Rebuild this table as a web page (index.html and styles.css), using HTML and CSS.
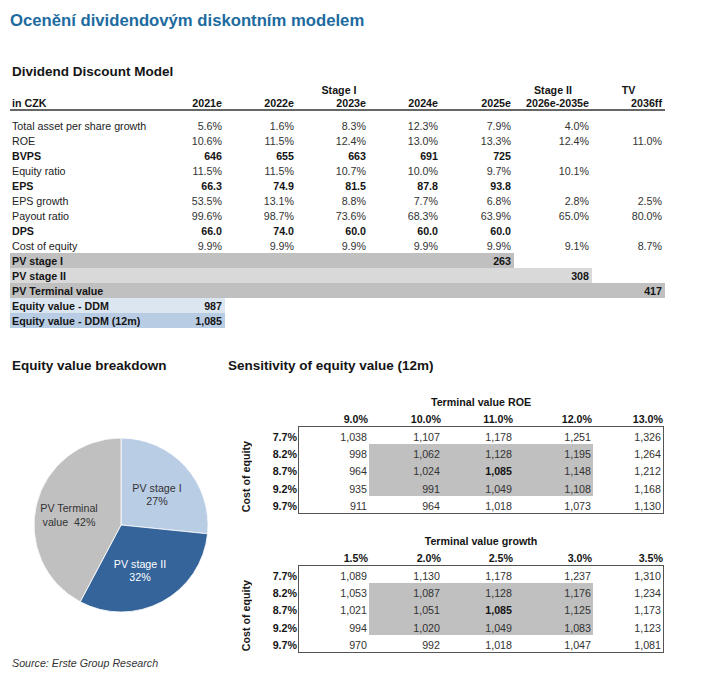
FILE: index.html
```html
<!DOCTYPE html>
<html lang="cs">
<head>
<meta charset="utf-8">
<title>Ocenění dividendovým diskontním modelem</title>
<link rel="stylesheet" href="styles.css">
</head>
<body>
<h1 class="title">Ocenění dividendovým diskontním modelem</h1>
<h2 class="sec ddm-title">Dividend Discount Model</h2>
<table class="ddm">
  <colgroup>
    <col class="w-label"><col class="w73"><col class="w72"><col class="w72"><col class="w72"><col class="w73"><col class="w78"><col class="w73">
  </colgroup>
  <thead>
    <tr class="stage"><th></th><th></th><th></th><th class="st1">Stage I</th><th></th><th></th><th class="st">Stage II</th><th class="st">TV</th></tr>
    <tr class="years"><th class="lbl">in CZK</th><th>2021e</th><th>2022e</th><th>2023e</th><th>2024e</th><th>2025e</th><th>2026e-2035e</th><th>2036ff</th></tr>
  </thead>
  <tbody>
    <tr class="first"><td class="lbl">Total asset per share growth</td><td>5.6%</td><td>1.6%</td><td>8.3%</td><td>12.3%</td><td>7.9%</td><td>4.0%</td><td></td></tr>
    <tr><td class="lbl">ROE</td><td>10.6%</td><td>11.5%</td><td>12.4%</td><td>13.0%</td><td>13.3%</td><td>12.4%</td><td>11.0%</td></tr>
    <tr class="b"><td class="lbl">BVPS</td><td>646</td><td>655</td><td>663</td><td>691</td><td>725</td><td></td><td></td></tr>
    <tr><td class="lbl">Equity ratio</td><td>11.5%</td><td>11.5%</td><td>10.7%</td><td>10.0%</td><td>9.7%</td><td>10.1%</td><td></td></tr>
    <tr class="b"><td class="lbl">EPS</td><td>66.3</td><td>74.9</td><td>81.5</td><td>87.8</td><td>93.8</td><td></td><td></td></tr>
    <tr><td class="lbl">EPS growth</td><td>53.5%</td><td>13.1%</td><td>8.8%</td><td>7.7%</td><td>6.8%</td><td>2.8%</td><td>2.5%</td></tr>
    <tr><td class="lbl">Payout ratio</td><td>99.6%</td><td>98.7%</td><td>73.6%</td><td>68.3%</td><td>63.9%</td><td>65.0%</td><td>80.0%</td></tr>
    <tr class="b"><td class="lbl">DPS</td><td>66.0</td><td>74.0</td><td>60.0</td><td>60.0</td><td>60.0</td><td></td><td></td></tr>
    <tr><td class="lbl">Cost of equity</td><td>9.9%</td><td>9.9%</td><td>9.9%</td><td>9.9%</td><td>9.9%</td><td>9.1%</td><td>8.7%</td></tr>
    <tr class="b pv1"><td class="lbl">PV stage I</td><td></td><td></td><td></td><td></td><td>263</td><td></td><td></td></tr>
    <tr class="b pv2"><td class="lbl">PV stage II</td><td></td><td></td><td></td><td></td><td></td><td>308</td><td></td></tr>
    <tr class="b pvtv"><td class="lbl">PV Terminal value</td><td></td><td></td><td></td><td></td><td></td><td></td><td>417</td></tr>
    <tr class="b eq1"><td class="lbl">Equity value - DDM</td><td>987</td><td></td><td></td><td></td><td></td><td></td><td></td></tr>
    <tr class="b eq2"><td class="lbl">Equity value - DDM (12m)</td><td>1,085</td><td></td><td></td><td></td><td></td><td></td><td></td></tr>
  </tbody>
</table>

<div class="bottom">
  <div class="left">
    <h2 class="sec pad">Equity value breakdown</h2>
    <svg class="pie" width="228" height="280" viewBox="0 0 228 280">
      <path d="M121,151 L121,64 A87,87 0 0 1 207.55,159.79 Z" fill="#b9cde5" stroke="#fff" stroke-width="0.8"/>
      <path d="M121,151 L207.55,159.79 A87,87 0 0 1 80.16,227.82 Z" fill="#35649b" stroke="#fff" stroke-width="0.8"/>
      <path d="M121,151 L80.16,227.82 A87,87 0 0 1 121,64 Z" fill="#c0c0c0" stroke="#fff" stroke-width="0.8"/>
      <text class="pl" x="157" y="117.7">PV stage I</text>
      <text class="pl" x="157" y="131">27%</text>
      <text class="pl" x="69" y="138.3">PV Terminal</text>
      <text class="pl" x="69" y="151.7">value&#160; 42%</text>
      <text class="pl w" x="140" y="194">PV stage II</text>
      <text class="pl w" x="140" y="206.7">32%</text>
    </svg>
    <p class="source">Source: Erste Group Research</p>
  </div>
  <div class="right">
    <h2 class="sec">Sensitivity of equity value (12m)</h2>

    <div class="sens first-sens">
      <div class="sens-title">Terminal value ROE</div>
      <div class="sens-head"><span>9.0%</span><span>10.0%</span><span>11.0%</span><span>12.0%</span><span>13.0%</span></div>
      <div class="sens-side">
        <div class="vlabel"><span>Cost of equity</span></div>
        <span class="rl r1">7.7%</span><span class="rl r2">8.2%</span><span class="rl r3">8.7%</span><span class="rl r4">9.2%</span><span class="rl r5">9.7%</span>
      </div>
      <div class="sens-box">
        <span>1,038</span><span>1,107</span><span>1,178</span><span>1,251</span><span>1,326</span>
        <span>998</span><span class="g">1,062</span><span class="g">1,128</span><span class="g">1,195</span><span>1,264</span>
        <span>964</span><span class="g">1,024</span><span class="g b">1,085</span><span class="g">1,148</span><span>1,212</span>
        <span>935</span><span class="g">991</span><span class="g">1,049</span><span class="g">1,108</span><span>1,168</span>
        <span>911</span><span>964</span><span>1,018</span><span>1,073</span><span>1,130</span>
      </div>
    </div>

    <div class="sens second-sens">
      <div class="sens-title">Terminal value growth</div>
      <div class="sens-head"><span>1.5%</span><span>2.0%</span><span>2.5%</span><span>3.0%</span><span>3.5%</span></div>
      <div class="sens-side">
        <div class="vlabel"><span>Cost of equity</span></div>
        <span class="rl r1">7.7%</span><span class="rl r2">8.2%</span><span class="rl r3">8.7%</span><span class="rl r4">9.2%</span><span class="rl r5">9.7%</span>
      </div>
      <div class="sens-box">
        <span>1,089</span><span>1,130</span><span>1,178</span><span>1,237</span><span>1,310</span>
        <span>1,053</span><span class="g">1,087</span><span class="g">1,128</span><span class="g">1,176</span><span>1,234</span>
        <span>1,021</span><span class="g">1,051</span><span class="g b">1,085</span><span class="g">1,125</span><span>1,173</span>
        <span>994</span><span class="g">1,020</span><span class="g">1,049</span><span class="g">1,083</span><span>1,123</span>
        <span>970</span><span>992</span><span>1,018</span><span>1,047</span><span>1,081</span>
      </div>
    </div>
  </div>
</div>
</body>
</html>
```

FILE: styles.css
```css
* { box-sizing: border-box; }

body {
  margin: 0;
  background: #fff;
  font-family: "Liberation Sans", Arial, sans-serif;
  font-size: 10.7px;
  color: #333;
}

.title {
  margin: 0;
  padding: 11px 0 0 10px;
  font-size: 16.7px;
  line-height: 20px;
  font-weight: 700;
  color: #1d6b9f;
}

.sec {
  margin: 0;
  font-size: 13.5px;
  line-height: 16px;
  font-weight: 700;
  color: #151515;
}

.ddm-title {
  margin-top: 33px;
  padding-left: 12px;
}

/* ---------- DDM table ---------- */
.ddm {
  margin: 3px 0 0 10px;
  width: 655px;
  table-layout: fixed;
  border-collapse: separate;
  border-spacing: 0;
}
.w-label { width: 142px; }
.w72 { width: 72px; }
.w73 { width: 73px; }
.w78 { width: 78px; }

.ddm th {
  padding: 0 3px 0 0;
  text-align: right;
  font-weight: 700;
  color: #151515;
  white-space: nowrap;
}
.ddm .stage th { line-height: 14px; }
.ddm .stage .st { text-align: center; padding: 0; }
.ddm .stage .st1 { text-align: center; padding: 0 0 0 12px; }
.ddm .years th {
  line-height: 12px;
  border-bottom: 2px solid #666;
}
.ddm th.lbl, .ddm td.lbl { text-align: left; padding-left: 2px; }

.ddm td {
  padding: 2px 3px 0 0;
  line-height: 13px;
  text-align: right;
  white-space: nowrap;
  color: #333;
}
.ddm td.lbl { color: #222; }
.ddm tr.first td { padding-top: 9px; }
.ddm tr.b td { font-weight: 700; color: #151515; }

.ddm tr.pv1 td:nth-child(-n+6) { background: #c0c0c0; }
.ddm tr.pv2 td:nth-child(-n+7) { background: #d9d9d9; }
.ddm tr.pvtv td { background: #c0c0c0; }
.ddm tr.eq1 td:nth-child(-n+2) { background: #dce6f1; }
.ddm tr.eq2 td:nth-child(-n+2) { background: #b8cce4; }

/* ---------- bottom ---------- */
.bottom {
  margin-top: 30px;
  display: flex;
  align-items: flex-start;
}
.left { width: 228px; flex: none; }
.left .pad { padding-left: 12px; }
.pie { display: block; }
.pl {
  font-family: "Liberation Sans", Arial, sans-serif;
  font-size: 10.7px;
  fill: #333;
  text-anchor: middle;
}
.pl.w { fill: #fff; }
.source {
  margin: 3px 0 0 12px;
  font-style: italic;
  line-height: 13px;
  color: #333;
}

.right { flex: none; width: 440px; }

.sens {
  display: grid;
  grid-template-columns: 70px 366px;
}
.first-sens { margin-top: 22px; }
.second-sens { margin-top: 21px; }

.sens-title {
  grid-column: 2;
  text-align: center;
  font-weight: 700;
  line-height: 13px;
  color: #151515;
}
.sens-head {
  grid-column: 2;
  display: grid;
  grid-template-columns: 71px 73px 72px 79px 71px;
  padding-top: 4px;
  line-height: 13px;
  font-weight: 700;
  color: #151515;
}
.sens-head span { text-align: right; padding-right: 1px; }

.sens-side {
  grid-column: 1;
  grid-row: 3;
  display: grid;
  grid-template-columns: 37px 33px;
  grid-template-rows: repeat(5, 17.2px);
  padding-top: 1px;
}
.vlabel {
  grid-column: 1;
  grid-row: 1 / span 5;
  display: flex;
  align-items: center;
  justify-content: center;
  padding: 13px 0 0 0;
}
.vlabel span {
  writing-mode: vertical-rl;
  transform: rotate(180deg);
  font-weight: 700;
  line-height: 13px;
  color: #151515;
  white-space: nowrap;
}
.rl {
  grid-column: 2;
  text-align: right;
  padding: 4px 1px 0 0;
  line-height: 13px;
  font-weight: 700;
  color: #151515;
}
.r1 { grid-row: 1; }
.r2 { grid-row: 2; }
.r3 { grid-row: 3; }
.r4 { grid-row: 4; }
.r5 { grid-row: 5; }

.sens-box {
  grid-column: 2;
  grid-row: 3;
  border: 1px solid #555;
  display: grid;
  grid-template-columns: 70px 73px 72px 79px 70px;
  grid-auto-rows: 17.2px;
}
.sens-box span {
  text-align: right;
  padding: 4px 2px 0 0;
  line-height: 13px;
  color: #333;
}
.sens-box .g { background: #c0c0c0; }
.sens-box .b { font-weight: 700; color: #151515; }
```
